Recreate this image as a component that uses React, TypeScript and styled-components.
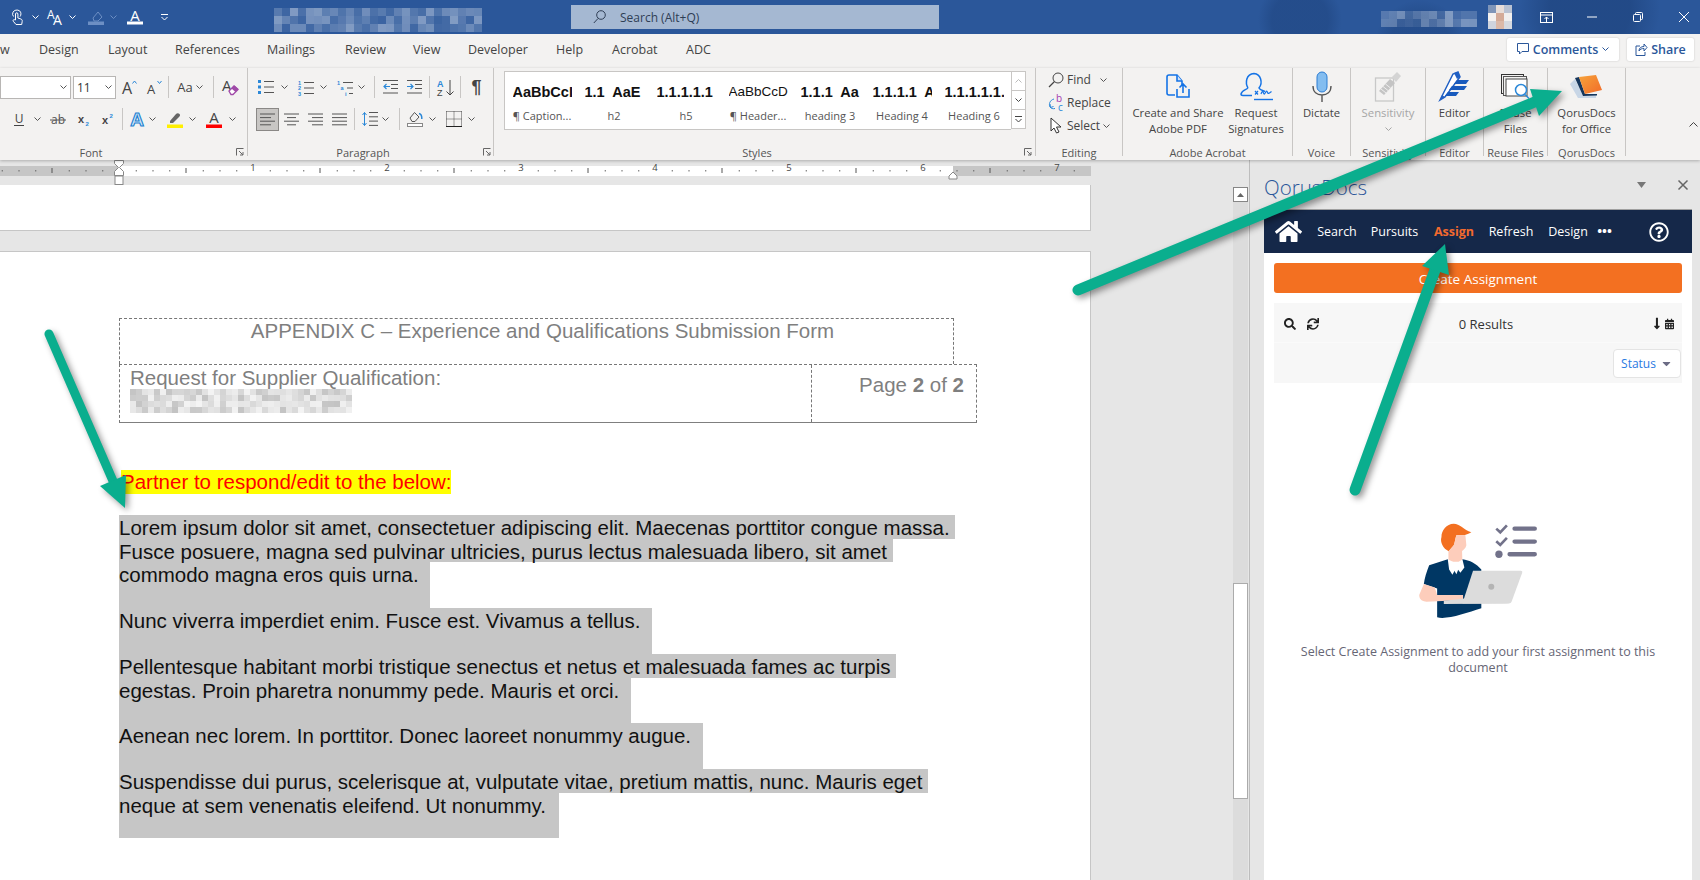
import React from "react";
import styled, { createGlobalStyle } from "styled-components";
import { FaHome, FaSearch, FaSync, FaRegQuestionCircle, FaCalendarAlt, FaLongArrowAltDown, FaCaretDown } from "react-icons/fa";

const UI = `"Open Sans", "Noto Sans", sans-serif`;
const ARIAL = `"Liberation Sans", Arial, sans-serif`;
const INK = "#444";
const BLUE = "#2b88d8";

const Global = createGlobalStyle`
  html, body { margin: 0; padding: 0; background: #e6e6e6; }
  body { font-family: ${UI}; overflow: hidden; }
  * { box-sizing: border-box; }
`;

const Page = styled.div`
  position: relative;
  width: 1700px;
  height: 880px;
  overflow: hidden;
  display: flex;
  flex-direction: column;
  background: #e6e6e6;
`;

/* generic row: each slot is spaced from the previous one */
const PlaceRow = styled.div<{ $h?: number }>`
  display: flex;
  align-items: center;
  height: ${(p) => (p.$h ? `${p.$h}px` : "100%")};
  flex: none;
`;
const Slot = styled.div<{ $l: number; $w: number; $left?: boolean }>`
  flex: none;
  display: flex;
  align-items: center;
  justify-content: ${(p) => (p.$left ? "flex-start" : "center")};
  gap: 3px;
  height: 100%;
  width: ${(p) => p.$w}px;
  margin-left: ${(p) => p.$l}px;
  white-space: nowrap;
`;
type Item = [number, number, React.ReactNode, boolean?];
const Place = ({ items, h }: { items: Item[]; h?: number }) => {
  let end = 0;
  return (
    <PlaceRow $h={h}>
      {items.map(([a, b, n, left], i) => {
        const l = a - end;
        end = b;
        return (
          <Slot key={i} $l={l} $w={b - a} $left={left}>
            {n}
          </Slot>
        );
      })}
    </PlaceRow>
  );
};

const Svg = styled.svg`
  display: block;
  flex: none;
  overflow: visible;
`;
const Ico = ({ w, h, children }: { w: number; h: number; children: React.ReactNode }) => (
  <Svg width={w} height={h} viewBox={`0 0 ${w} ${h}`} fill="none">
    {children}
  </Svg>
);

const Chev = ({ c = "#555" }: { c?: string }) => (
  <Ico w={7} h={4}>
    <path d="M.5.5l3 3 3-3" stroke={c} />
  </Ico>
);

const Mosaic = ({ w, h, cell, seed, color, lo = 0.08, hi = 0.34 }: { w: number; h: number; cell: number; seed: number; color: string; lo?: number; hi?: number }) => {
  const rects: React.ReactNode[] = [];
  let s = seed;
  for (let y = 0; y < h; y += cell) {
    for (let x = 0; x < w; x += cell) {
      s = (s * 16807) % 2147483647;
      const a = (s % 100) / 100;
      rects.push(<rect key={`${x}-${y}`} x={x} y={y} width={cell} height={cell} fill={color} opacity={lo + a * hi} />);
    }
  }
  return <Ico w={w} h={h}>{rects}</Ico>;
};

/* ---------- title bar ---------- */
const TitleBar = styled.div`
  height: 34px;
  flex: none;
  color: #fff;
  background:
    radial-gradient(circle at 1300px 20px, rgba(24, 58, 112, 0.35) 0 28px, transparent 42px),
    radial-gradient(circle at 1590px 10px, rgba(24, 58, 112, 0.45) 0 40px, transparent 70px),
    radial-gradient(circle at 1420px 45px, rgba(24, 58, 112, 0.3) 0 30px, transparent 45px),
    #2b579a;
`;
const SearchBox = styled.div`
  width: 100%;
  height: 24px;
  background: #a5b8d2;
  display: flex;
  align-items: center;
  gap: 14px;
  padding-left: 22px;
  font-size: 12px;
  color: #2f3e55;
`;
const TouchIcon = () => (
  <Ico w={12} h={17}>
    <path d="M2.5 7.5A4 4 0 0 1 2 3.2C3 1 6.5.4 8.5 1.8c2 1.6 1.6 4.4.6 5.7" stroke="#fff" />
    <path d="M4.5 11V5c0-1.6 2.4-1.6 2.4 0v4l3 1c1.2.5 1.5 1.3 1.3 2.5l-.5 3H5L2.3 12.3c-.8-1 .6-2.3 1.5-1.5z" stroke="#fff" />
  </Ico>
);
const DimBucket = () => (
  <Ico w={16} h={16}>
    <path d="M5 9l5-6 4 5-4 4H6z" stroke="#6d8fc4" />
    <rect y={12.5} width={16} height={3.5} fill="#6d8fc4" />
  </Ico>
);
const FontColorTop = () => (
  <Ico w={16} h={16}>
    <text x={8} y={11.5} textAnchor="middle" fontFamily={UI} fontSize={15} fill="#fff">A</text>
    <rect y={12.5} width={16} height={3} fill="#fff" />
  </Ico>
);
const DoubleA = () => (
  <Ico w={17} h={16}>
    <text x={0} y={10} fontFamily={UI} fontSize={12} fill="#fff">A</text>
    <text x={6} y={16} fontFamily={UI} fontSize={14} fill="#fff">A</text>
  </Ico>
);
const Customize = () => (
  <Ico w={7} h={7}>
    <path d="M0 .5h7M.5 3l3 3 3-3" stroke="#fff" />
  </Ico>
);
const WinRibbon = () => (
  <Ico w={13} h={11}>
    <rect x={.5} y={.5} width={12} height={10} stroke="#fff" />
    <path d="M.5 3h12M6.5 10V5M4.5 7l2-2 2 2" stroke="#fff" />
  </Ico>
);
const WinMin = () => <Ico w={10} h={2}><path d="M0 1h10" stroke="#fff" /></Ico>;
const WinRestore = () => (
  <Ico w={10} h={10}>
    <rect x={.5} y={2.5} width={7} height={7} rx={1} stroke="#fff" />
    <path d="M2.5 2V1.5a1 1 0 0 1 1-1h5a1 1 0 0 1 1 1v5a1 1 0 0 1-1 1H8" stroke="#fff" />
  </Ico>
);
const WinClose = () => <Ico w={10} h={10}><path d="M0 0l10 10M10 0L0 10" stroke="#fff" /></Ico>;
const MagTop = () => (
  <Ico w={13} h={14}>
    <circle cx={8} cy={5} r={4.3} stroke="#2f3e55" />
    <path d="M5 8.5L.8 13" stroke="#2f3e55" />
  </Ico>
);
const AvatarCell = styled.div`
  display: grid;
  grid-template-columns: repeat(3, 8px);
  grid-auto-rows: 8px;
`;
const AvatarBit = styled.div<{ $c: string }>`
  background: ${(p) => p.$c};
`;
const Avatar = () => (
  <AvatarCell>
    {["#7f95b8", "#e7ddd8", "#b9c2d2", "#f4f1ef", "#d4ab98", "#f1efee", "#cfd4de", "#dcb9a8", "#d6d9e0"].map((c, i) => (
      <AvatarBit key={i} $c={c} />
    ))}
  </AvatarCell>
);

/* ---------- tab row ---------- */
const TabRow = styled.div`
  height: 34px;
  flex: none;
  background: #f3f2f1;
`;
const TabText = styled.span`
  font-size: 12.5px;
  color: #444;
  margin-bottom: 3px;
`;
const HeadBtn = styled.div`
  width: 100%;
  height: 23px;
  background: #fff;
  border-radius: 2px;
  box-shadow: 0 0 2px rgba(0, 0, 0, 0.2);
  display: flex;
  align-items: center;
  justify-content: center;
  gap: 4px;
  margin-bottom: 4px;
  font-size: 12.5px;
  font-weight: 600;
  color: #2b579a;
`;

/* ---------- ribbon ---------- */
const Ribbon = styled.div`
  height: 92px;
  flex: none;
  display: flex;
  background: #f3f2f1;
  padding-bottom: 4px;
  box-shadow: 0 1px 3px rgba(0, 0, 0, 0.25);
  position: relative;
  z-index: 2;
`;
const Group = styled.div<{ $w: number }>`
  width: ${(p) => p.$w}px;
  flex: none;
  height: 88px;
  border-right: 1px solid #c8c6c4;
  display: flex;
  flex-direction: column;
`;
const GroupBody = styled.div<{ $top?: number; $gap?: number }>`
  flex: 1;
  min-height: 0;
  display: flex;
  flex-direction: column;
  padding-top: ${(p) => p.$top ?? 0}px;
  gap: ${(p) => p.$gap ?? 0}px;
`;
const LabelRow = styled.div`
  height: 16px;
  flex: none;
  margin-bottom: -4px;
`;
const GroupLabel = styled.span`
  font-size: 11px;
  color: #555;
`;
const Sep = styled.div`
  width: 1px;
  height: 22px;
  background: #c8c6c4;
`;
const Launcher = () => (
  <Ico w={8} h={8}>
    <path d="M.5 7.5V.5h7M3 3l4 4M7 4v3H4" stroke="#666" />
  </Ico>
);
const Combo = styled.div<{ $pl?: number }>`
  width: 100%;
  height: 23px;
  background: #fff;
  border: 1px solid #b8b6b4;
  display: flex;
  align-items: center;
  justify-content: space-between;
  padding: 0 3px 0 ${(p) => p.$pl ?? 3}px;
  font-size: 12px;
  color: #333;
`;
const ActiveBox = styled.div`
  width: 100%;
  height: 23px;
  background: #c8c6c4;
  border: 1px solid #8a8886;
  display: flex;
  align-items: center;
  justify-content: center;
`;
const Lines = ({ rows }: { rows: [number, number][] }) => (
  <Ico w={15} h={13}>
    {rows.map(([a, b], i) => (
      <path key={i} d={`M${a} ${1 + i * 3.6}H${b}`} stroke="#555" />
    ))}
  </Ico>
);
const BulletIcon = () => (
  <Ico w={16} h={14}>
    {[0, 5.5, 11].map((y) => (
      <React.Fragment key={y}>
        <rect y={y} width={3} height={3} fill={BLUE} />
        <path d={`M6 ${y + 1.5}H16`} stroke="#555" />
      </React.Fragment>
    ))}
  </Ico>
);
const NumberIcon = () => (
  <Ico w={16} h={15}>
    {["1", "2", "3"].map((t, i) => (
      <React.Fragment key={t}>
        <text x={0} y={4.5 + i * 5.5} fontFamily={ARIAL} fontSize={5.5} fontWeight={700} fill={BLUE}>{t}</text>
        <path d={`M6 ${2.5 + i * 5.5}H16`} stroke="#555" />
      </React.Fragment>
    ))}
  </Ico>
);
const MultiIcon = () => (
  <Ico w={16} h={15}>
    <text x={0} y={4.5} fontFamily={ARIAL} fontSize={5.5} fontWeight={700} fill={BLUE}>1</text>
    <text x={3.5} y={10} fontFamily={ARIAL} fontSize={5.5} fontWeight={700} fill={BLUE}>a</text>
    <text x={8} y={15.5} fontFamily={ARIAL} fontSize={5.5} fontWeight={700} fill={BLUE}>i</text>
    <path d="M6 2.5H16M10 8H16M12 13.5h4" stroke="#555" />
  </Ico>
);
const IndentIcon = ({ dir }: { dir: -1 | 1 }) => (
  <Ico w={15} h={14}>
    <path d="M0 .5h15M8 4.5h7M8 8.5h7M0 13h15" stroke="#555" />
    {dir < 0 ? <path d="M7 6.5H1M3.5 4L1 6.5 3.5 9" stroke={BLUE} strokeWidth={1.2} /> : <path d="M0 6.5h6M3.5 4L6 6.5 3.5 9" stroke={BLUE} strokeWidth={1.2} />}
  </Ico>
);
const SortIcon = () => (
  <Ico w={17} h={17}>
    <text x={0} y={8} fontFamily={ARIAL} fontWeight={700} fontSize={9} fill={BLUE}>A</text>
    <text x={0} y={17} fontFamily={ARIAL} fontSize={9} fill="#444">Z</text>
    <path d="M13 1v15M9.5 12.5L13 16l3.5-3.5" stroke="#444" />
  </Ico>
);
const LineSpacing = () => (
  <Ico w={16} h={16}>
    <path d="M2.5 1.5v13M.5 4l2-2.5L4.5 4M.5 12l2 2.5 2-2.5" stroke={BLUE} />
    <path d="M7 1.5h9M7 5.8h9M7 10.1h9M7 14.4h9" stroke="#555" />
  </Ico>
);
const Shading = () => (
  <Ico w={16} h={16}>
    <path d="M3 7l4.5-5.5L12 6l-4 4.5H5z" stroke="#555" />
    <path d="M12 2.5c2 .5 3 2.5 2.8 5.5" stroke={BLUE} strokeWidth={1.5} />
    <rect x={.5} y={12.5} width={15} height={3} stroke="#888" fill="#fff" />
  </Ico>
);
const Borders = () => (
  <Ico w={16} h={16}>
    <path d="M.5.5h15M.5 8h15M.5.5v15M8 .5v15M15.5.5v15" stroke="#444" strokeDasharray="1 1" />
    <path d="M0 15.5h16" stroke="#222" />
  </Ico>
);
const UIcon = () => (
  <Ico w={10} h={13}>
    <text x={5} y={10} textAnchor="middle" fontFamily={UI} fontSize={12} fill="#444">U</text>
    <path d="M0 12.5h10" stroke="#444" />
  </Ico>
);
const Strike = () => (
  <Ico w={16} h={11}>
    <text x={8} y={10} textAnchor="middle" fontFamily={UI} fontSize={12} fill="#555">ab</text>
    <path d="M0 6h16" stroke="#555" />
  </Ico>
);
const SubIcon = () => (
  <Ico w={12} h={13}>
    <text x={0} y={10} fontFamily={ARIAL} fontWeight={700} fontSize={11} fill="#444">x</text>
    <text x={7.5} y={13} fontFamily={ARIAL} fontWeight={700} fontSize={6} fill={BLUE}>2</text>
  </Ico>
);
const SupIcon = () => (
  <Ico w={12} h={13}>
    <text x={0} y={11} fontFamily={ARIAL} fontWeight={700} fontSize={11} fill="#444">x</text>
    <text x={7.5} y={5} fontFamily={ARIAL} fontWeight={700} fontSize={6} fill={BLUE}>2</text>
  </Ico>
);
const TextEffect = () => (
  <Ico w={16} h={16}>
    <text x={8} y={15} textAnchor="middle" fontFamily={ARIAL} fontWeight={700} fontSize={19} fill="#cfe6f8" stroke="#1b7fd0" strokeWidth={1.1}>A</text>
  </Ico>
);
const Highlighter = () => (
  <Ico w={16} h={17}>
    <path d="M3 10l6-7c1-1 2.5-1 3.5 0s.5 2-.5 3l-6 6H3z" fill="#666" />
    <rect y={13.5} width={16} height={3.5} fill="#ffef00" />
  </Ico>
);
const FontColor = () => (
  <Ico w={16} h={17}>
    <text x={8} y={12} textAnchor="middle" fontFamily={UI} fontSize={15} fill="#444">A</text>
    <rect y={13.5} width={16} height={3.5} fill="#f00" />
  </Ico>
);
const GrowFont = ({ up }: { up: boolean }) => (
  <Ico w={15} h={15}>
    <text x={0} y={14} fontFamily={UI} fontSize={up ? 16 : 13} fill="#444">A</text>
    <path d={up ? "M10.5 3.5L12.5 1l2 2.5" : "M10.5 1l2 2.5 2-2.5"} stroke={BLUE} />
  </Ico>
);
const ClearFmt = () => (
  <Ico w={16} h={16}>
    <text x={0} y={12} fontFamily={UI} fontSize={15} fill="#444">A</text>
    <path d="M7 12l5-5 4 3.5-5 5H9z" fill="#fff" stroke="#a04aa8" strokeWidth={1.3} />
    <path d="M9.5 9.5l4 3.5 3-3-4-3.5z" fill="#a04aa8" />
  </Ico>
);
const Pilcrow = styled.span`
  font-family: ${ARIAL};
  font-weight: 700;
  font-size: 18px;
  color: #444;
`;
const AaText = styled.span`
  font-size: 13px;
  color: #444;
`;

const Gallery = styled.div`
  margin: 3px 0 0 10px;
  width: 522px;
  height: 59px;
  display: flex;
`;
const GalleryList = styled.div`
  flex: none;
  width: 507px;
  height: 59px;
  background: #fff;
  border: 1px solid #c8c6c4;
  border-right: 0;
  display: flex;
  padding-left: 1px;
`;
const StyleItem = styled.div`
  width: 72px;
  flex: none;
  display: flex;
  flex-direction: column;
  align-items: center;
`;
const Preview = styled.div<{ $b: boolean }>`
  width: 59px;
  height: 20px;
  margin-top: 10px;
  overflow: hidden;
  white-space: pre;
  font-family: ${ARIAL};
  font-size: ${(p) => (p.$b ? 14.5 : 13.5)}px;
  line-height: 20px;
  font-weight: ${(p) => (p.$b ? 700 : 400)};
  color: #111;
`;
const StyleName = styled.div`
  margin-top: 6px;
  font-size: 11px;
  color: #555;
  white-space: nowrap;
`;
const GalleryBtns = styled.div`
  flex: 1;
  display: flex;
  flex-direction: column;
`;
const GalleryBtn = styled.div`
  height: 20px;
  background: #fff;
  border: 1px solid #c8c6c4;
  display: flex;
  align-items: center;
  justify-content: center;
  margin-bottom: -1px;
`;
const ToolText = styled.span`
  font-size: 12px;
  color: #444;
`;
const BigBtn = styled.div<{ $dim?: boolean }>`
  width: 100%;
  height: 100%;
  display: flex;
  flex-direction: column;
  align-items: center;
  padding-top: 2px;
  font-size: 11.3px;
  line-height: 16px;
  text-align: center;
  color: ${(p) => (p.$dim ? "#a6a6a6" : "#444")};
`;
const BigIcon = styled.div`
  height: 32px;
  margin-bottom: 3px;
  display: flex;
  align-items: center;
  justify-content: center;
  flex: none;
`;
const BigLine = styled.div`
  white-space: nowrap;
  display: flex;
  justify-content: center;
  align-items: center;
  height: 16px;
`;

const FindIcon = () => (
  <Ico w={16} h={16}>
    <circle cx={10} cy={6} r={5} stroke="#444" />
    <path d="M6.5 9.5L1 15" stroke="#444" strokeWidth={1.3} />
  </Ico>
);
const ReplaceIcon = () => (
  <Ico w={15} h={16}>
    <text x={7} y={7} fontFamily={UI} fontSize={10} fill="#a43ab0">b</text>
    <text x={9} y={15.5} fontFamily={UI} fontSize={10} fill={BLUE}>c</text>
    <path d="M5 4C1 5-.5 9 1 12c1 1.5 3 2 5 1.5M1 9l.5 3.5 3-1" stroke={BLUE} />
  </Ico>
);
const SelectIcon = () => (
  <Ico w={13} h={17}>
    <path d="M1 1v13l3-3 2.5 5 2.5-1-2.5-5h4.5z" fill="#fff" stroke="#333" />
  </Ico>
);
const PdfIcon = () => (
  <Ico w={24} h={25}>
    <path d="M9 21H3a2 2 0 0 1-2-2V3a2 2 0 0 1 2-2h8l5 6v4" stroke="#1473e6" strokeWidth={1.6} />
    <path d="M11 1v6h5" stroke="#1473e6" strokeWidth={1.6} fill="#cfe2fb" />
    <path d="M11 15v8h12v-8M17 19v-9M13.5 13.5L17 10l3.5 3.5" stroke="#1473e6" strokeWidth={1.6} />
  </Ico>
);
const SignIcon = () => (
  <Ico w={33} h={29}>
    <path d="M8 16C5 11 6 2 14 1.5 21 2 23 11 19 16c1 2 4 2.5 6 3.5M8 16c-2 2-6 2-7 6 0 1 1 1.5 2 1.5h9" stroke="#1473e6" strokeWidth={1.5} />
    <path d="M15 19l3 3.5M18 19l-3 3.5M21 22c1-3 2-3 2.5-1 .5 1.5 1 1.5 2-.5 1-2 1.5-1.5 2 0s1.5 1 4-1" stroke="#1473e6" strokeWidth={1.2} />
    <path d="M14 27.5h19" stroke="#1473e6" strokeWidth={1.4} />
  </Ico>
);
const MicIcon = () => (
  <Ico w={20} h={31}>
    <rect x={5} y={1} width={10} height={20} rx={5} fill="#83bdf0" stroke="#2b7cd3" />
    <path d="M1 15c0 6 4 9 9 9s9-3 9-9M10 24v7" stroke="#555" strokeWidth={1.4} />
  </Ico>
);
const SensIcon = () => (
  <Ico w={28} h={31}>
    <rect x={1.5} y={7} width={18} height={23} stroke="#c8c8c8" strokeWidth={1.3} fill="#f3f2f1" />
    <path d="M5 20L16 8l5 4-11 12z" fill="#c4c4c4" />
    <path d="M18 6l5-5 4 4-5 6z" fill="#d4d4d4" />
    <path d="M7 18l5 4M9 15.5l5 4M11.5 13l5 4" stroke="#eee" />
  </Ico>
);
const EditorIcon = () => (
  <Ico w={32} h={30}>
    <path d="M1 29L14 3l5-2 2 5L6 26z" fill="#fff" stroke="#2160c4" strokeWidth={1.5} />
    <path d="M1 29l5-3-3-2z" fill="#2160c4" />
    <path d="M15 2l4-1 2 5-3 2z" fill="#2160c4" />
    <path d="M18 9h12l-3 4H15zM13 15h15l-3 4H10zM9 21h11l-3 4H6z" fill="#185abd" />
  </Ico>
);
const ReuseIcon = () => (
  <Ico w={30} h={25}>
    <rect x={.5} y={.5} width={22} height={19} stroke="#333" />
    <rect x={2.5} y={2.5} width={23} height={19} stroke="#555" fill="#f3f2f1" />
    <rect x={5} y={5} width={21} height={17} stroke="#444" fill="#fff" />
    <circle cx={20} cy={16} r={5.5} fill="#fff" stroke="#2b88d8" strokeWidth={1.5} />
    <path d="M24 20.5l4 4" stroke="#2b88d8" strokeWidth={1.5} />
  </Ico>
);
const QorusIcon = () => (
  <Ico w={34} h={25}>
    <defs>
      <linearGradient id="qo" x1="0" y1="0" x2="1" y2="1">
        <stop offset="0" stopColor="#f6a33a" />
        <stop offset="1" stopColor="#f26b29" />
      </linearGradient>
    </defs>
    <path d="M0 10L5 5 13 22 26 21 26 24 8 24Z" fill="#c8d6e6" />
    <path d="M5 4L9 3 15 20 27 20 27 21.5 13 22Z" fill="#16365c" />
    <path d="M9 3L26 1 32 16 15 20Z" fill="url(#qo)" />
  </Ico>
);

/* ---------- ruler ---------- */
const RulerSvg = () => {
  const ticks: React.ReactNode[] = [];
  for (let k = -7; k <= 58; k++) {
    const x = 119 + k * 16.75;
    if (x > 1085) break;
    if (k % 8 === 0 && k > 0) {
      ticks.push(<text key={k} x={x} y={10.5} textAnchor="middle" fontFamily={UI} fontSize={9.5} fill="#444">{k / 8}</text>);
    } else if (k % 4 === 0 && k !== 0) {
      ticks.push(<path key={k} d={`M${x} 8v5`} stroke="#555" />);
    } else if (k !== 0) {
      ticks.push(<rect key={k} x={x} y={10} width={1} height={1.5} fill="#666" />);
    }
  }
  return (
    <Ico w={1091} h={25}>
      <rect y={6} width={119} height={10} fill="#c6c6c6" />
      <rect x={119} y={6} width={834} height={10} fill="#fff" />
      <rect x={953} y={6} width={138} height={10} fill="#c6c6c6" />
      {ticks}
      <path d="M114.5.5h9v3l-4 4 4 4v4h-9v-4l4-4-4-4z" fill="#fff" stroke="#888" />
      <rect x={115} y={16} width={8} height={8.5} fill="#fff" stroke="#888" />
      <path d="M953 13l4 4v3h-8v-3z" transform="translate(0 -1)" fill="#fff" stroke="#888" />
    </Ico>
  );
};

/* ---------- document ---------- */
const Main = styled.div`
  flex: 1;
  min-height: 0;
  display: flex;
`;
const DocColumn = styled.div`
  width: 1250px;
  flex: none;
  display: flex;
  flex-direction: column;
  border-right: 1px solid #bdbdbd;
`;
const RulerRow = styled.div`
  height: 25px;
  flex: none;
`;
const DocRow = styled.div`
  flex: 1;
  min-height: 0;
  display: flex;
`;
const DocScroll = styled.div`
  width: 1091px;
  flex: none;
  display: flex;
  flex-direction: column;
`;
const TopSheet = styled.div`
  height: 46px;
  flex: none;
  background: #fff;
  border-bottom: 1px solid #c6c6c6;
  border-right: 1px solid #c6c6c6;
`;
const Sheet = styled.div`
  flex: 1;
  margin-top: 20px;
  background: #fff;
  border-top: 1px solid #c6c6c6;
  border-right: 1px solid #c6c6c6;
  padding: 66px 0 0 119px;
`;
const TitleCell = styled.div`
  width: 835px;
  height: 46px;
  padding-left: 12px;
  border: 1px dashed #777;
  border-bottom: 0;
  font-family: ${ARIAL};
  font-size: 20.5px;
  color: #7f7f7f;
  text-align: center;
  line-height: 24px;
`;
const InfoRow = styled.div`
  width: 858px;
  height: 59px;
  display: flex;
  border: 1px dashed #777;
  border-bottom: 1px solid #7f7f7f;
  font-family: ${ARIAL};
  color: #7f7f7f;
  font-size: 20.5px;
`;
const InfoLeft = styled.div`
  width: 692px;
  flex: none;
  padding: 1px 0 0 10px;
  border-right: 1px dashed #777;
  line-height: 23px;
`;
const InfoRight = styled.div`
  flex: 1;
  text-align: right;
  padding: 8px 12px 0 0;
  line-height: 24px;
`;
const Partner = styled.div`
  margin: 47px 0 0 2px;
  width: 330px;
  height: 24px;
  background: #ff0;
  color: #f00;
  font-family: ${ARIAL};
  font-size: 20.5px;
  line-height: 24px;
  white-space: nowrap;
`;
const Body = styled.div`
  margin-top: 21px;
`;
const SelLine = styled.div<{ $w: number; $h: number }>`
  width: ${(p) => p.$w}px;
  height: ${(p) => p.$h}px;
  background: #c6c6c6;
  font-family: ${ARIAL};
  font-size: 20.5px;
  line-height: 26px;
  color: #111;
  white-space: nowrap;
`;
const Gutter = styled.div`
  width: 142px;
  flex: none;
`;
const ScrollTrack = styled.div`
  width: 15px;
  flex: none;
  margin-top: 2px;
  background: #dcdcdc;
  display: flex;
  flex-direction: column;
`;
const ScrollUp = styled.div`
  height: 15px;
  background: #fff;
  border: 1px solid #868686;
  display: flex;
  align-items: center;
  justify-content: center;
`;
const ScrollThumb = styled.div`
  height: 216px;
  margin-top: 381px;
  background: #fff;
  border: 1px solid #ababab;
`;

/* ---------- task pane ---------- */
const Pane = styled.div`
  flex: 1;
  display: flex;
  flex-direction: column;
  padding: 0 8px 0 14px;
`;
const PaneHead = styled.div`
  height: 49px;
  flex: none;
`;
const PaneTitle = styled.span`
  font-size: 20.5px;
  font-weight: 300;
  color: #2b579a;
  margin-top: 5px;
`;
const Card = styled.div`
  flex: 1;
  display: flex;
  flex-direction: column;
  background: #fff;
  border-top: 1px solid #a0a0a0;
`;
const Nav = styled.div`
  height: 43px;
  flex: none;
  background: #152849;
  color: #fff;
`;
const NavLink = styled.span<{ $on?: boolean }>`
  font-size: 12.5px;
  font-weight: ${(p) => (p.$on ? 700 : 500)};
  color: ${(p) => (p.$on ? "#f26a2e" : "#fff")};
`;
const Dots = styled.span`
  font-size: 13px;
  font-weight: 700;
  letter-spacing: 0;
  line-height: 1;
`;
const CreateBtn = styled.div`
  flex: none;
  height: 30px;
  margin: 10px 10px 0;
  padding-top: 1px;
  background: #f37021;
  border-radius: 3px;
  color: #fff;
  font-size: 13.5px;
  display: flex;
  align-items: center;
  justify-content: center;
`;
const ResultsBox = styled.div`
  flex: none;
  height: 80px;
  margin: 10px 10px 0;
  background: #f7f7f7;
  display: flex;
  flex-direction: column;
`;
const ToolbarRow = styled.div`
  height: 40px;
  flex: none;
  padding-top: 2px;
  border-bottom: 1px solid #fafafa;
  color: #222;
`;
const ResultText = styled.span`
  font-size: 13px;
  color: #333;
`;
const StatusRow = styled.div`
  flex: 1;
  display: flex;
  justify-content: flex-end;
  align-items: center;
  padding-right: 1px;
`;
const StatusBtn = styled.div`
  width: 68px;
  height: 29px;
  background: #fff;
  border: 1px solid #e4e4e4;
  border-radius: 4px;
  display: flex;
  align-items: center;
  justify-content: center;
  gap: 4px;
  color: #2a7ae2;
  font-size: 12px;
`;
const Empty = styled.div`
  flex: 1;
  display: flex;
  flex-direction: column;
  align-items: center;
  padding-top: 139px;
`;
const EmptyText = styled.div`
  width: 370px;
  margin-top: 24px;
  text-align: center;
  font-size: 12.5px;
  line-height: 16px;
  color: #666675;
`;
const Illustration = () => (
  <Svg width={120} height={98} viewBox="355 125 360 295" fill="none">
    <path d="M447 213C430 205 420 185 425 170 425 150 440 130 462 130 480 130 492 148 515 156 505 162 497 163 495 165L470 165C466 175 466 190 462 195Z" fill="#f37021" />
    <path d="M470 165L497 165 500 195C498 205 490 210 487 212L488 245 446 245 446 213 462 195Z" fill="#fdcdbb" />
    <path d="M444 237L388 255C380 275 374 295 372 312L412 325 412 412C440 420 500 400 545 385L545 268C530 250 510 240 488 237L470 282Z" fill="#003764" />
    <path d="M444 237L448 268 458 284 470 262 482 278 494 262 488 237 470 250Z" fill="#fff" />
    <path d="M372 312L358 345C358 360 370 365 380 365L490 360 490 345 412 345 405 322Z" fill="#fdcdbb" />
    <path d="M520 272L664 272Q670 272 668 278L636 365Q634 370 628 370L488 370Z" fill="#dcdcdc" />
    <path d="M432 362L495 355 630 370 432 372Z" fill="#dcdcdc" />
    <circle cx={575} cy={320} r={9} fill="#b4b4b4" />
    <path d="M590 145L602 156 622 135M590 183L602 194 622 173" stroke="#72728a" strokeWidth={8} />
    <circle cx={598} cy={222} r={11} fill="#72728a" />
    <path d="M645 145H706M645 184H706M630 222H706" stroke="#72728a" strokeWidth={13} strokeLinecap="round" />
  </Svg>
);

/* ---------- arrows over everything ---------- */
const ArrowLayer = styled.svg`
  position: absolute;
  left: 0;
  top: 0;
  z-index: 5;
  pointer-events: none;
  filter: drop-shadow(3px 3px 3px rgba(0, 0, 0, 0.4));
`;
const TEAL = "#0aae8e";
const Arrow = ({ t, b, h, w }: { t: [number, number]; b: [number, number]; h: string; w: number }) => (
  <>
    <line x1={t[0]} y1={t[1]} x2={b[0]} y2={b[1]} stroke={TEAL} strokeWidth={w} strokeLinecap="round" />
    <polygon points={h} fill={TEAL} />
  </>
);

const tabs: [number, string][] = [
  [39, "Design"], [108, "Layout"], [175, "References"], [267, "Mailings"], [345, "Review"],
  [413, "View"], [468, "Developer"], [556, "Help"], [612, "Acrobat"], [686, "ADC"],
];
const styleItems: [string, string, boolean][] = [
  ["AaBbCcI", "¶ Caption...", true], ["1.1  AaE", "h2", true], ["1.1.1.1.1", "h5", true],
  ["AaBbCcD", "¶ Header...", false], ["1.1.1  Aa", "heading 3", true], ["1.1.1.1  A", "Heading 4", true],
  ["1.1.1.1.1.", "Heading 6", true],
];
const bodyLines: [number, number, string][] = [
  [836, 24, "Lorem ipsum dolor sit amet, consectetuer adipiscing elit. Maecenas porttitor congue massa."],
  [774, 23, "Fusce posuere, magna sed pulvinar ultricies, purus lectus malesuada libero, sit amet"],
  [311, 46, "commodo magna eros quis urna."],
  [533, 46, "Nunc viverra imperdiet enim. Fusce est. Vivamus a tellus."],
  [777, 24, "Pellentesque habitant morbi tristique senectus et netus et malesuada fames ac turpis"],
  [512, 45, "egestas. Proin pharetra nonummy pede. Mauris et orci."],
  [584, 46, "Aenean nec lorem. In porttitor. Donec laoreet nonummy augue."],
  [809, 24, "Suspendisse dui purus, scelerisque at, vulputate vitae, pretium mattis, nunc. Mauris eget"],
  [440, 45, "neque at sem venenatis eleifend. Ut nonummy."],
];

export default function App() {
  return (
    <Page>
      <Global />
      <TitleBar>
        <Place
          items={[
            [11, 23, <TouchIcon />],
            [31, 39, <Chev c="#fff" />],
            [47, 64, <DoubleA />],
            [68, 76, <Chev c="#fff" />],
            [88, 104, <DimBucket />],
            [109, 117, <Chev c="#6d8fc4" />],
            [127, 143, <FontColorTop />],
            [161, 168, <Customize />],
            [274, 482, <Mosaic w={208} h={18} cell={8} seed={77} color="#fff" />],
            [571, 939, <SearchBox><MagTop />Search (Alt+Q)</SearchBox>],
            [1381, 1477, <Mosaic w={96} h={12} cell={8} seed={1234} color="#fff" />],
            [1488, 1512, <Avatar />],
            [1540, 1553, <WinRibbon />],
            [1587, 1597, <WinMin />],
            [1633, 1643, <WinRestore />],
            [1679, 1689, <WinClose />],
          ]}
        />
      </TitleBar>
      <TabRow>
        <Place
          items={[
            [0, 12, <TabText>w</TabText>, true],
            ...tabs.map(([x, t]): Item => [x, x + 60, <TabText>{t}</TabText>, true]),
            [1507, 1619, <HeadBtn>
              <Ico w={12} h={12}><path d="M.5.5h11v8H5L2.5 11V8.5h-2z" stroke="#2b579a" /></Ico>
              Comments
              <Chev c="#2b579a" />
            </HeadBtn>],
            [1627, 1694, <HeadBtn>
              <Ico w={12} h={13}><path d="M5 3H1v9.5h9V9M4 8c0-3 2-4.5 5-4.5V1l3 3.5L9 8V5.5C7 5.5 5 6 4 8z" stroke="#2b579a" /></Ico>
              Share
            </HeadBtn>],
          ]}
        />
      </TabRow>
      <Ribbon>
        <Group $w={248}>
          <GroupBody $top={7} $gap={8}>
            <Place
              h={24}
              items={[
                [0, 71, <Combo><span /><Chev /></Combo>],
                [73, 116, <Combo>11<Chev /></Combo>],
                [119, 140, <GrowFont up />],
                [146, 162, <GrowFont up={false} />],
                [168, 169, <Sep />],
                [176, 204, <><AaText>Aa</AaText><Chev /></>],
                [213, 214, <Sep />],
                [221, 238, <ClearFmt />],
              ]}
            />
            <Place
              h={24}
              items={[
                [13, 24, <UIcon />],
                [33, 41, <Chev />],
                [50, 66, <Strike />],
                [78, 90, <SubIcon />],
                [101, 114, <SupIcon />],
                [122, 123, <Sep />],
                [129, 145, <TextEffect />],
                [148, 156, <Chev />],
                [167, 183, <Highlighter />],
                [188, 196, <Chev />],
                [206, 222, <FontColor />],
                [228, 236, <Chev />],
              ]}
            />
          </GroupBody>
          <LabelRow>
            <Place items={[[41, 141, <GroupLabel>Font</GroupLabel>], [235, 245, <Launcher />]]} />
          </LabelRow>
        </Group>
        <Group $w={246}>
          <GroupBody $top={7} $gap={8}>
            <Place
              h={24}
              items={[
                [10, 26, <BulletIcon />],
                [32, 40, <Chev />],
                [50, 66, <NumberIcon />],
                [71, 79, <Chev />],
                [89, 105, <MultiIcon />],
                [109, 117, <Chev />],
                [126, 127, <Sep />],
                [135, 150, <IndentIcon dir={-1} />],
                [159, 174, <IndentIcon dir={1} />],
                [181, 182, <Sep />],
                [189, 206, <SortIcon />],
                [212, 213, <Sep />],
                [222, 235, <Pilcrow>¶</Pilcrow>],
              ]}
            />
            <Place
              h={24}
              items={[
                [8, 31, <ActiveBox><Lines rows={[[0, 15], [0, 11], [0, 15], [0, 11]]} /></ActiveBox>],
                [36, 51, <Lines rows={[[0, 15], [3, 12], [0, 15], [3, 12]]} />],
                [60, 75, <Lines rows={[[0, 15], [4, 15], [0, 15], [4, 15]]} />],
                [84, 99, <Lines rows={[[0, 15], [0, 15], [0, 15], [0, 15]]} />],
                [106, 107, <Sep />],
                [114, 130, <LineSpacing />],
                [133, 141, <Chev />],
                [151, 152, <Sep />],
                [159, 175, <Shading />],
                [180, 188, <Chev />],
                [198, 214, <Borders />],
                [219, 227, <Chev />],
              ]}
            />
          </GroupBody>
          <LabelRow>
            <Place items={[[65, 165, <GroupLabel>Paragraph</GroupLabel>], [234, 244, <Launcher />]]} />
          </LabelRow>
        </Group>
        <Group $w={542}>
          <GroupBody>
            <Gallery>
              <GalleryList>
                {styleItems.map(([p, n, b]) => (
                  <StyleItem key={n}>
                    <Preview $b={b}>{p}</Preview>
                    <StyleName>{n}</StyleName>
                  </StyleItem>
                ))}
              </GalleryList>
              <GalleryBtns>
                <GalleryBtn><Ico w={7} h={4}><path d="M.5 3.5l3-3 3 3" stroke="#bbb" /></Ico></GalleryBtn>
                <GalleryBtn><Chev c="#444" /></GalleryBtn>
                <GalleryBtn><Ico w={7} h={7}><path d="M0 .5h7M.5 3l3 3 3-3" stroke="#444" /></Ico></GalleryBtn>
              </GalleryBtns>
            </Gallery>
          </GroupBody>
          <LabelRow>
            <Place items={[[213, 313, <GroupLabel>Styles</GroupLabel>], [529, 539, <Launcher />]]} />
          </LabelRow>
        </Group>
        <Group $w={87}>
          <GroupBody>
            <Place h={23} items={[[12, 28, <FindIcon />], [31, 60, <ToolText>Find</ToolText>, true], [63, 71, <Chev />]]} />
            <Place h={23} items={[[12, 28, <ReplaceIcon />], [31, 80, <ToolText>Replace</ToolText>, true]]} />
            <Place h={23} items={[[13, 28, <SelectIcon />], [31, 80, <><ToolText>Select</ToolText><Chev /></>, true]]} />
          </GroupBody>
          <LabelRow>
            <Place items={[[0, 86, <GroupLabel>Editing</GroupLabel>]]} />
          </LabelRow>
        </Group>
        <Group $w={170}>
          <GroupBody>
            <Place
              h={70}
              items={[
                [5, 105, <BigBtn><BigIcon><PdfIcon /></BigIcon><BigLine>Create and Share</BigLine><BigLine>Adobe PDF</BigLine></BigBtn>],
                [100, 166, <BigBtn><BigIcon><SignIcon /></BigIcon><BigLine>Request</BigLine><BigLine>Signatures</BigLine></BigBtn>],
              ]}
            />
          </GroupBody>
          <LabelRow>
            <Place items={[[0, 169, <GroupLabel>Adobe Acrobat</GroupLabel>]]} />
          </LabelRow>
        </Group>
        <Group $w={58}>
          <GroupBody>
            <BigBtn><BigIcon><MicIcon /></BigIcon><BigLine>Dictate</BigLine></BigBtn>
          </GroupBody>
          <LabelRow>
            <Place items={[[0, 57, <GroupLabel>Voice</GroupLabel>]]} />
          </LabelRow>
        </Group>
        <Group $w={75}>
          <GroupBody>
            <BigBtn $dim><BigIcon><SensIcon /></BigIcon><BigLine>Sensitivity</BigLine><BigLine><Chev c="#a6a6a6" /></BigLine></BigBtn>
          </GroupBody>
          <LabelRow>
            <Place items={[[0, 74, <GroupLabel>Sensitivity</GroupLabel>]]} />
          </LabelRow>
        </Group>
        <Group $w={58}>
          <GroupBody>
            <BigBtn><BigIcon><EditorIcon /></BigIcon><BigLine>Editor</BigLine></BigBtn>
          </GroupBody>
          <LabelRow>
            <Place items={[[0, 57, <GroupLabel>Editor</GroupLabel>]]} />
          </LabelRow>
        </Group>
        <Group $w={64}>
          <GroupBody>
            <BigBtn><BigIcon><ReuseIcon /></BigIcon><BigLine>Reuse</BigLine><BigLine>Files</BigLine></BigBtn>
          </GroupBody>
          <LabelRow>
            <Place items={[[0, 63, <GroupLabel>Reuse Files</GroupLabel>]]} />
          </LabelRow>
        </Group>
        <Group $w={78}>
          <GroupBody>
            <BigBtn><BigIcon><QorusIcon /></BigIcon><BigLine>QorusDocs</BigLine><BigLine>for Office</BigLine></BigBtn>
          </GroupBody>
          <LabelRow>
            <Place items={[[0, 77, <GroupLabel>QorusDocs</GroupLabel>]]} />
          </LabelRow>
        </Group>
        <GroupBody>
          <LabelRow />
          <Place h={88} items={[[63, 71, <Ico w={9} h={5}><path d="M.5 4.5l4-4 4 4" stroke="#444" /></Ico>]]} />
        </GroupBody>
      </Ribbon>
      <Main>
        <DocColumn>
          <RulerRow><RulerSvg /></RulerRow>
          <DocRow>
            <DocScroll>
              <TopSheet />
              <Sheet>
                <TitleCell>APPENDIX C – Experience and Qualifications Submission Form</TitleCell>
                <InfoRow>
                  <InfoLeft>
                    Request for Supplier Qualification:
                    <Mosaic w={218} h={22} cell={6} seed={4242} color="#6f6f6f" />
                  </InfoLeft>
                  <InfoRight>Page <b>2</b> of <b>2</b></InfoRight>
                </InfoRow>
                <Partner>Partner to respond/edit to the below:</Partner>
                <Body>
                  {bodyLines.map(([w, h, t]) => (
                    <SelLine key={t} $w={w} $h={h}>{t}</SelLine>
                  ))}
                </Body>
              </Sheet>
            </DocScroll>
            <Gutter />
            <ScrollTrack>
              <ScrollUp><Ico w={7} h={4}><path d="M3.5 0l3.5 4H0z" fill="#666" /></Ico></ScrollUp>
              <ScrollThumb />
            </ScrollTrack>
          </DocRow>
        </DocColumn>
        <Pane>
          <PaneHead>
            <Place
              items={[
                [0, 150, <PaneTitle>QorusDocs</PaneTitle>, true],
                [373, 383, <Ico w={10} h={6}><path d="M0 0h9L4.5 6z" fill="#777" /></Ico>],
                [413, 425, <Ico w={10} h={10}><path d="M.5.5l9 9M9.5.5l-9 9" stroke="#666" strokeWidth={1.5} /></Ico>],
              ]}
            />
          </PaneHead>
          <Card>
            <Nav>
              <Place
                items={[
                  [11, 38, <FaHome size={27} color="#fff" />],
                  [54, 92, <NavLink>Search</NavLink>],
                  [108, 153, <NavLink>Pursuits</NavLink>],
                  [170, 210, <NavLink $on>Assign</NavLink>],
                  [226, 268, <NavLink>Refresh</NavLink>],
                  [284, 324, <NavLink>Design</NavLink>],
                  [334, 347, <Dots>•••</Dots>],
                  [385, 405, <FaRegQuestionCircle size={20} color="#fff" />],
                ]}
              />
            </Nav>
            <CreateBtn>Create Assignment</CreateBtn>
            <ResultsBox>
              <ToolbarRow>
                <Place
                  items={[
                    [10, 22, <FaSearch size={12} />],
                    [33, 45, <FaSync size={12} />],
                    [162, 262, <ResultText>0 Results</ResultText>],
                    [378, 400, <><FaLongArrowAltDown size={13} /><FaCalendarAlt size={12} /></>],
                  ]}
                />
              </ToolbarRow>
              <StatusRow>
                <StatusBtn>Status<FaCaretDown size={13} color="#6c6c85" /></StatusBtn>
              </StatusRow>
            </ResultsBox>
            <Empty>
              <Illustration />
              <EmptyText>Select Create Assignment to add your first assignment to this document</EmptyText>
            </Empty>
          </Card>
        </Pane>
      </Main>
      <ArrowLayer width={1700} height={880} viewBox="0 0 1700 880">
        <Arrow t={[1078, 290]} b={[1537, 101]} w={11} h="1562,91 1530,89 1539,116" />
        <Arrow t={[1355, 490]} b={[1435, 270]} w={11} h="1445,244 1422,266 1449,275" />
        <Arrow t={[49, 334]} b={[113, 481]} w={9} h="125,508 100,486 126,475" />
      </ArrowLayer>
    </Page>
  );
}
